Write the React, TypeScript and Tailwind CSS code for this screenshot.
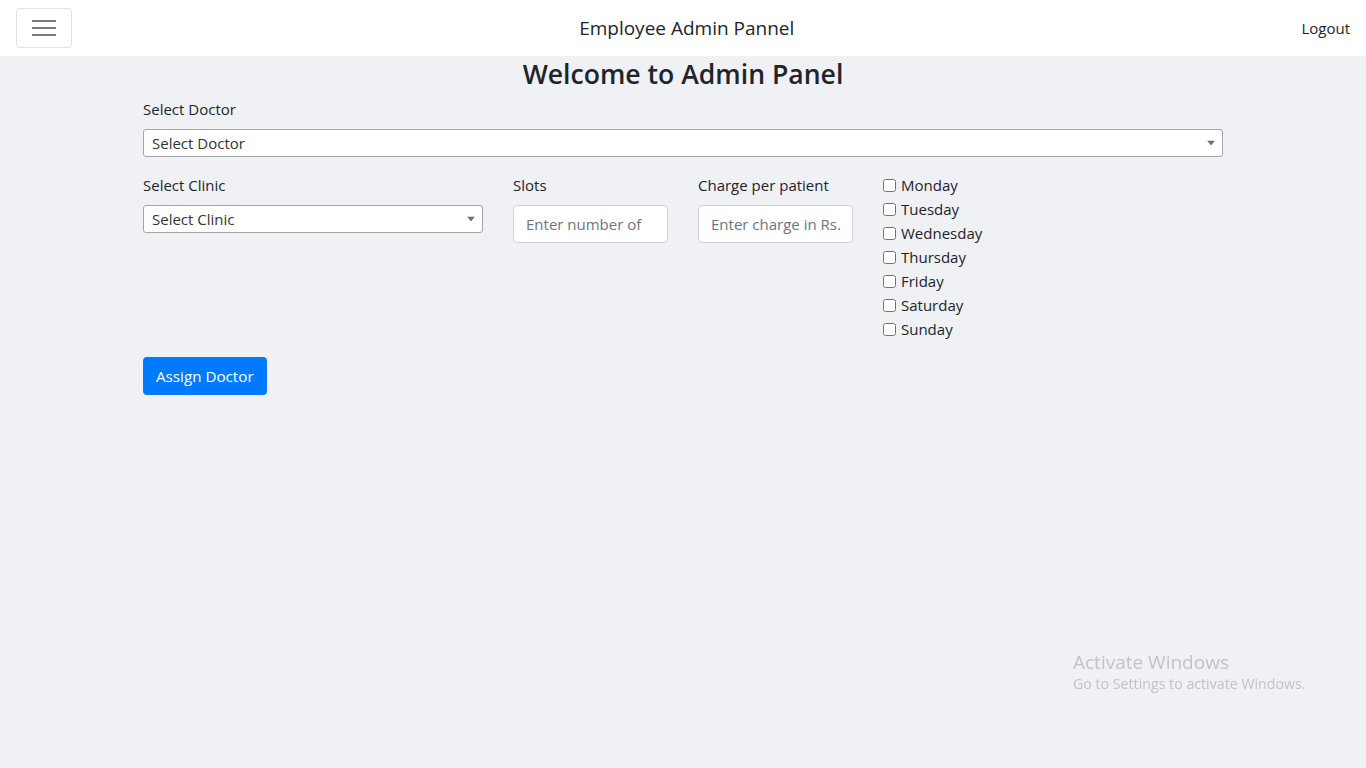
import { useState } from "react";

const days = ["Monday", "Tuesday", "Wednesday", "Thursday", "Friday", "Saturday", "Sunday"];

function Caret() {
  return (
    <svg
      width="8"
      height="5"
      viewBox="0 0 8 5"
      className="pointer-events-none absolute right-[8px] top-1/2 -translate-y-1/2"
    >
      <path d="M0 0h8L4 5z" fill="#6f6f6f" />
    </svg>
  );
}

function SelectBox({ label, width }: { label: string; width: string }) {
  return (
    <div className={`relative ${width}`}>
      <select className="w-full h-[28px] appearance-none rounded-[3px] border border-[#a6a6a6] bg-white pl-[8px] pr-6 text-[15px] text-[#333] outline-none">
        <option>{label}</option>
      </select>
      <Caret />
    </div>
  );
}

export default function App() {
  const [checked, setChecked] = useState<Record<string, boolean>>({});

  return (
    <div className="min-h-screen bg-[#f0f1f5] text-[#212529] font-['Open_Sans','Noto_Sans',sans-serif]">
      <nav className="h-[56px] bg-white flex items-center justify-between px-4">
        <button className="w-[56px] h-[40px] rounded-[4px] border border-[#e2e2e2] flex flex-col items-center justify-center gap-[5px]">
          <span className="block w-[24px] h-[2px] bg-[#7a7a7a]" />
          <span className="block w-[24px] h-[2px] bg-[#7a7a7a]" />
          <span className="block w-[24px] h-[2px] bg-[#7a7a7a]" />
        </button>
        <span className="text-[19px] text-[#212529]">Employee Admin Pannel</span>
        <a href="#" className="text-[15px] text-[#212529]">
          Logout
        </a>
      </nav>

      <main className="w-[1080px] mx-auto">
        <h1 className="text-[26.6px] font-semibold text-center leading-[34px] mt-px">
          Welcome to Admin Panel
        </h1>

        <label className="block text-[15px] leading-6 mt-[6px] mb-2">Select Doctor</label>
        <SelectBox label="Select Doctor" width="w-full" />

        <div className="flex gap-[30px] mt-4">
          <div className="w-[340px]">
            <label className="block text-[15px] leading-6 mb-2">Select Clinic</label>
            <SelectBox label="Select Clinic" width="w-full" />
          </div>
          <div className="w-[155px]">
            <label className="block text-[15px] leading-6 mb-2">Slots</label>
            <input
              placeholder="Enter number of"
              className="w-full h-[38px] rounded-[4px] border border-[#ced4da] bg-white px-3 text-[15px] placeholder:text-[#6c757d] outline-none"
            />
          </div>
          <div className="w-[155px]">
            <label className="block text-[15px] leading-6 mb-2">Charge per patient</label>
            <input
              placeholder="Enter charge in Rs."
              className="w-full h-[38px] rounded-[4px] border border-[#ced4da] bg-white px-3 text-[15px] placeholder:text-[#6c757d] outline-none"
            />
          </div>
          <div className="flex flex-col">
            {days.map((d) => (
              <label key={d} className="flex items-center gap-[5px] text-[15px] leading-6">
                <input
                  type="checkbox"
                  checked={!!checked[d]}
                  onChange={() => setChecked({ ...checked, [d]: !checked[d] })}
                  className="m-0 w-[13px] h-[13px]"
                />
                {d}
              </label>
            ))}
          </div>
        </div>

        <button className="mt-4 h-[38px] px-[13px] rounded-[4px] bg-[#007bff] text-white text-[15.2px]">
          Assign Doctor
        </button>
      </main>

      <div className="fixed left-[1073px] top-[650px] text-[#c3c3c6] pointer-events-none">
        <div className="text-[19px] leading-6">Activate Windows</div>
        <div className="text-[14.2px] leading-5">Go to Settings to activate Windows.</div>
      </div>
    </div>
  );
}
